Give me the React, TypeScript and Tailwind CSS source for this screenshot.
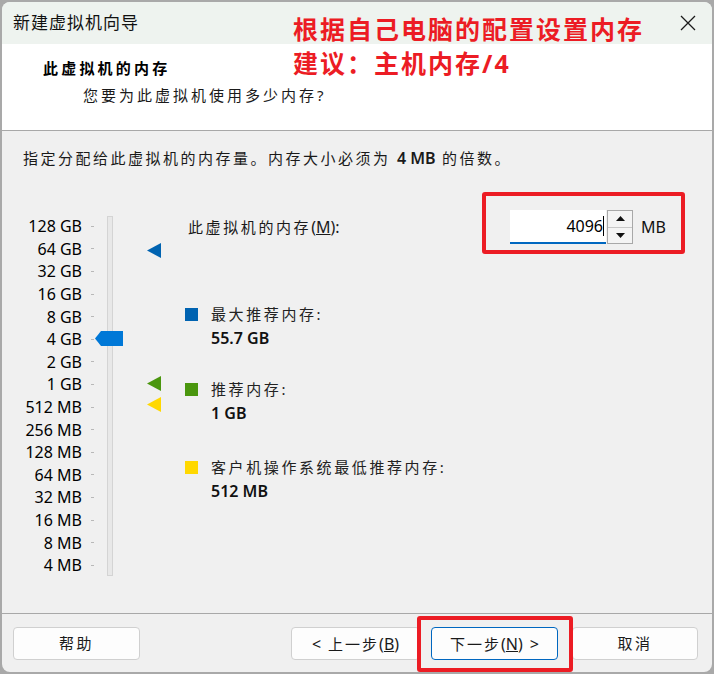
import React from 'react';

const scale = [
  '128 GB', '64 GB', '32 GB', '16 GB', '8 GB', '4 GB', '2 GB', '1 GB',
  '512 MB', '256 MB', '128 MB', '64 MB', '32 MB', '16 MB', '8 MB', '4 MB',
];

const font = "font-['Noto_Sans','Noto_Sans_CJK_SC',sans-serif]";

function Marker({ color, top }: { color: string; top: string }) {
  return (
    <svg className={`absolute left-[145px] ${top}`} width="14" height="15" viewBox="0 0 14 15">
      <polygon points="0,7.5 14,0 14,15" fill={color} />
    </svg>
  );
}

function Legend({ color, title, value, mt }: { color: string; title: string; value: string; mt: string }) {
  return (
    <div className={mt}>
      <div className="flex items-center h-[24px]">
        <span className={`w-[13px] h-[13px] ${color}`} />
        <span className="ml-[13px] text-[15px] tracking-[2.6px] text-[#222]">{title}</span>
      </div>
      <div className="h-[24px] leading-[24px] pl-[26px] text-[16px] font-semibold text-[#111]">{value}</div>
    </div>
  );
}

export default function App() {
  return (
    <div className={`w-[714px] h-[674px] bg-[#a9a9a9] p-[2px] ${font}`}>
      <div className="relative h-full rounded-[8px] overflow-hidden flex flex-col bg-[#f0f0f0]">
        {/* title bar */}
        <div className="h-[42px] bg-[#eef3ef] flex items-center pl-[11px] pr-[16px]">
          <span className="text-[17px] tracking-[1px] text-[#111]">新建虚拟机向导</span>
          <svg className="ml-auto" width="16" height="16" viewBox="0 0 16 16">
            <path d="M1 1 L15 15 M15 1 L1 15" stroke="#1a1a1a" strokeWidth="1.3" />
          </svg>
        </div>

        {/* header */}
        <div className="h-[87px] bg-white border-b border-[#a8a8a8] pt-[14px]">
          <div className="pl-[41px] leading-[20px] text-[15px] font-bold tracking-[3.2px] text-black">此虚拟机的内存</div>
          <div className="pl-[81px] mt-[7px] leading-[20px] text-[15px] tracking-[3px] text-[#1a1a1a]">您要为此虚拟机使用多少内存?</div>
        </div>

        {/* body */}
        <div className="flex-1 pt-[17px]">
          <p className="pl-[21px] leading-[20px] text-[15px] tracking-[2.5px] text-[#1a1a1a]">
            指定分配给此虚拟机的内存量。内存大小必须为 <span className="font-semibold tracking-normal text-[16px]">4 MB</span> 的倍数。
          </p>

          <div className="flex mt-[37px]">
            <div className="relative w-[183px] pt-[10px] flex">
              <div className="flex flex-col">
                {scale.map((s) => (
                  <div key={s} className="h-[22.6px] flex items-center">
                    <span className="w-[80px] text-right text-[16px] text-black">{s}</span>
                    <span className="ml-[9px] w-[3px] h-px bg-[#b8b8b8]" />
                  </div>
                ))}
              </div>
              <div className="ml-[13px] w-[6px] my-[1px] border border-[#d4d4d4] bg-[#e8e8e8]" />
              <svg className="absolute left-[93px] top-[126px]" width="28" height="15" viewBox="0 0 28 15">
                <polygon points="0,7.5 6,0 28,0 28,15 6,15" fill="#0078d7" />
              </svg>
              <Marker color="#0063b1" top="top-[38px]" />
              <Marker color="#4a960e" top="top-[171px]" />
              <Marker color="#ffd800" top="top-[192px]" />
            </div>

            <div className="flex-1">
              <div className="h-[44px] flex items-center">
                <span className="w-[325px] pl-[3px] text-[15px] tracking-[2.6px] text-[#1a1a1a]">
                  此虚拟机的内存<span className="tracking-normal text-[16px]">(<span className="underline">M</span>):</span>
                </span>
                <div className="w-[96px] h-[34px] bg-white border-b-2 border-[#0067c0] flex items-center justify-end pr-[2px]">
                  <span className="text-[16px] text-black">4096</span>
                  <span className="w-px h-[20px] bg-black" />
                </div>
                <div className="ml-[1px] w-[26px] h-[34px] border border-[#a8a8a8] bg-[#f4f4f4] flex flex-col">
                  <div className="flex-1 flex items-center justify-center border-b border-[#c8c8c8]">
                    <svg width="9" height="5" viewBox="0 0 9 5"><polygon points="0,5 4.5,0 9,5" fill="#111" /></svg>
                  </div>
                  <div className="flex-1 flex items-center justify-center">
                    <svg width="9" height="5" viewBox="0 0 9 5"><polygon points="0,0 9,0 4.5,5" fill="#111" /></svg>
                  </div>
                </div>
                <span className="ml-[8px] text-[16px] text-[#111]">MB</span>
              </div>

              <Legend color="bg-[#0063b1]" title="最大推荐内存:" value="55.7 GB" mt="mt-[53px]" />
              <Legend color="bg-[#4a960e]" title="推荐内存:" value="1 GB" mt="mt-[27px]" />
              <Legend color="bg-[#ffd800]" title="客户机操作系统最低推荐内存:" value="512 MB" mt="mt-[30px]" />
            </div>
          </div>
        </div>

        {/* footer */}
        <div className="h-[59px] border-t border-[#a8a8a8] flex items-start pt-[13px] pl-[11px] pr-[14px]">
          <button className="w-[127px] h-[33px] rounded-[4px] border border-[#d0d0d0] bg-[#fdfdfd] text-[15px] tracking-[2.5px] text-[#1a1a1a]">帮助</button>
          <button className="ml-auto w-[129px] h-[33px] rounded-[4px] border border-[#d0d0d0] bg-[#fdfdfd] text-[15px] tracking-[2px] text-[#1a1a1a]">
            <span className="text-[16px] tracking-normal mr-[7px]">&lt;</span>上一步<span className="text-[16px] tracking-normal">(<span className="underline">B</span>)</span>
          </button>
          <button className="ml-[11px] w-[127px] h-[33px] rounded-[4px] border border-[#0067c0] bg-[#fdfdfd] text-[15px] tracking-[2px] text-[#1a1a1a]">
            下一步<span className="text-[16px] tracking-normal">(<span className="underline">N</span>)</span><span className="text-[16px] tracking-normal ml-[7px]">&gt;</span>
          </button>
          <button className="ml-[14px] w-[126px] h-[33px] rounded-[4px] border border-[#d0d0d0] bg-[#fdfdfd] text-[15px] tracking-[2.5px] text-[#1a1a1a]">取消</button>
        </div>

        {/* red annotations */}
        <div className="absolute left-[291px] top-[10px] text-[25px] leading-[34px] font-bold tracking-[2px] text-[#ec1c24]">
          <div>根据自己电脑的配置设置内存</div>
          <div>建议：主机内存/4</div>
        </div>
        <div className="absolute left-[480px] top-[190px] w-[203px] h-[62px] border-[4px] border-[#ec1c24] rounded-[3px]" />
        <div className="absolute left-[415px] top-[614px] w-[156px] h-[56px] border-[4px] border-[#ec1c24] rounded-[3px]" />
      </div>
    </div>
  );
}
